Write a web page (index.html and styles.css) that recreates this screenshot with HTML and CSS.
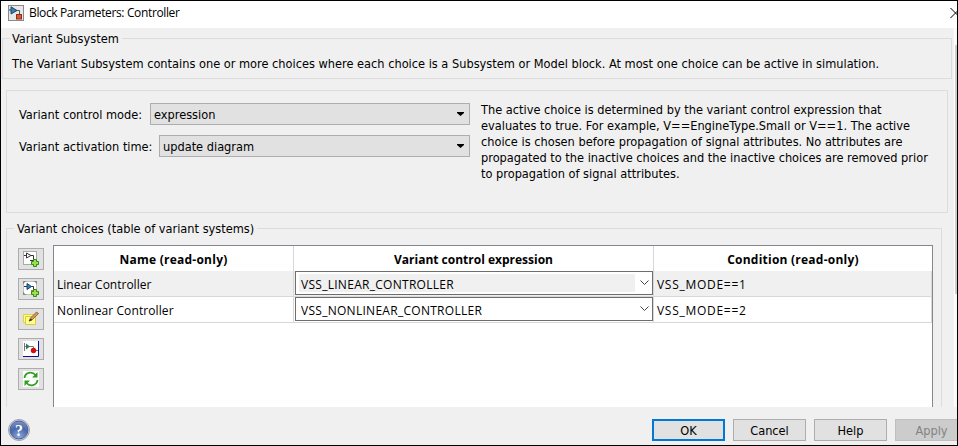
FILE: index.html
```html
<!DOCTYPE html>
<html lang="en">
<head>
<meta charset="utf-8">
<title>Block Parameters: Controller</title>
<link rel="stylesheet" href="styles.css">
</head>
<body>
<div class="dialog">
  <header class="titlebar">
    <svg class="app-icon" width="16" height="16" viewBox="0 0 16 16"><rect x=".5" y=".5" width="15" height="15" fill="#e8e8e8" stroke="#8a8a8a"/><path d="M8 5.500h3.500V9" fill="none" stroke="#555"/><path d="M1 5h2" stroke="#333"/><path d="M3 1.800 9 5.500 3 9z" fill="#2f83b7" stroke="#246"/><rect x="8.500" y="9.500" width="5" height="4.500" fill="#e2542c" stroke="#8e2f18"/></svg>
    <span class="title">Block Parameters: Controller</span>
    <svg class="close" width="7" height="12" viewBox="0 0 7 12"><path d="M.5 1 10.500 11M.5 11 10.500 1" stroke="#000" fill="none"/></svg>
  </header>
  <div class="body">
    <main class="content">
      <section class="group about">
        <h2 class="legend">Variant Subsystem</h2>
        <p>The Variant Subsystem contains one or more choices where each choice is a Subsystem or Model block. At most one choice can be active in simulation.</p>
      </section>
      <section class="group modes">
        <div class="fields">
          <div class="field"><label>Variant control mode:</label><div class="select"><span>expression</span><svg width="7" height="4"><path d="M0 0h7v1L3.500 4 0 1z"/></svg></div></div>
          <div class="field activation"><label>Variant activation time:</label><div class="select"><span>update diagram</span><svg width="7" height="4"><path d="M0 0h7v1L3.500 4 0 1z"/></svg></div></div>
        </div>
        <div class="hint">
          <div>The active choice is determined by the variant control expression that</div>
          <div>evaluates to true. For example, V==EngineType.Small or V==1. The active</div>
          <div>choice is chosen before propagation of signal attributes. No attributes are</div>
          <div>propagated to the inactive choices and the inactive choices are removed prior</div>
          <div>to propagation of signal attributes.</div>
        </div>
      </section>
      <section class="group choices">
        <h2 class="legend">Variant choices (table of variant systems)</h2>
        <div class="tools">
          <button><svg width="16" height="16" viewBox="0 0 16 16"><rect x=".5" y=".5" width="13" height="13" fill="#fff" stroke="#aaa"/><path d="M1 4.500h2M3.500 2v5L8 4.500zM8 4.500h2.500V9M7 9.500h3" fill="none" stroke="#333"/><path d="M10.500 8.500h3v2h2v3h-2v2h-3v-2h-2v-3h2z" fill="#9be04a" stroke="#348a18"/></svg></button>
          <button><svg width="16" height="16" viewBox="0 0 16 16"><rect width="14" height="14" fill="#888"/><rect x=".5" y=".5" width="13" height="13" rx="4" fill="#fff"/><path d="M1 5.500h3M8 5.500h2.500V9" fill="none" stroke="#333"/><path d="M4 2.500v6l4.500-3z" fill="#2585c5" stroke="#246"/><path d="M8 9h3v3H8z" fill="#d66b3b"/><path d="M10.500 8.500h3v2h2v3h-2v2h-3v-2h-2v-3h2z" fill="#9be04a" stroke="#348a18"/></svg></button>
          <button><svg width="16" height="16" viewBox="0 0 16 16"><path d="M.5 3.500h11v8H.5z" fill="#ffff70" stroke="#e0d050"/><path d="M2.500 5.500h10v8h-10z" fill="#ffff8c" stroke="#dcca3c"/><path d="m6 10 1.500-3 6-6 2 1.500-6 6z" fill="#d49a62" stroke="#754323" stroke-width=".7"/><path d="m6 10.500 1.500-3 2 1.500z" fill="#333"/></svg></button>
          <button><svg width="16" height="16" viewBox="0 0 16 16"><rect width="16" height="16" fill="#fff"/><path d="M15.500 0v15.500H0" fill="none" stroke="#0b0b93"/><path d="M1.500 2v8M1 5.500h9.500V9M13 9.500h2" fill="none" stroke="#777"/><path d="M3 2.500v6l4-3z" fill="#2f7b65"/><circle cx="10.500" cy="9.500" r="2.700" fill="#d40c12"/></svg></button>
          <button><svg width="16" height="16" viewBox="0 0 16 16"><rect width="16" height="16" fill="#fff"/><path d="M1.500 7C2 1.500 9 0 12.500 4M14.500 9C14 14.500 7 16 3.500 12" fill="none" stroke="#2fa01e" stroke-width="1.800"/><path d="M14.500 1v5.500H9zM1.500 15V9.500H7z" fill="#2fa01e"/></svg></button>
        </div>
        <div class="table">
          <div class="row head"><div class="cell name">Name (read-only)</div><div class="cell">Variant control expression</div><div class="cell condition">Condition (read-only)</div></div>
          <div class="row shaded"><div class="cell">Linear Controller</div><div class="cell"><div class="combo"><div class="value">VSS_LINEAR_CONTROLLER</div><svg width="9" height="6"><path d="m.5.500 4 4 4-4" fill="none" stroke="#444"/></svg></div></div><div class="cell mode">VSS_MODE==1</div></div>
          <div class="row"><div class="cell nonlinear">Nonlinear Controller</div><div class="cell"><div class="combo"><div class="value">VSS_NONLINEAR_CONTROLLER</div><svg width="9" height="6"><path d="m.5.500 4 4 4-4" fill="none" stroke="#444"/></svg></div></div><div class="cell mode">VSS_MODE==2</div></div>
        </div>
      </section>
    </main>
    <div class="scrollbar"><div class="thumb"></div></div>
  </div>
  <footer class="footer">
    <svg class="help" width="22" height="22" viewBox="0 0 22 22"><defs><radialGradient id="g" cx=".5" cy=".9" r=".9"><stop offset="0" stop-color="#8fa9dc"/><stop offset=".6" stop-color="#4868ac"/><stop offset="1" stop-color="#7e95c6"/></radialGradient></defs><circle cx="11" cy="11" r="10.500" fill="#d4d8e0" stroke="#9a9fa9"/><circle cx="11" cy="11" r="9" fill="url(#g)" stroke="#4b609a"/><text x="11" y="17" text-anchor="middle">?</text></svg>
    <div class="actions"><button class="primary">OK</button><button>Cancel</button><button>Help</button><button class="disabled">Apply</button></div>
  </footer>
</div>
</body>
</html>
```

FILE: styles.css
```css
* { box-sizing: border-box; }
body { margin: 0; overflow: hidden; font: 12.67px/16px "DejaVu Sans Condensed", "DejaVu Sans", sans-serif; font-stretch: condensed; color: #000; white-space: nowrap; }
h2, p { margin: 0; font-size: inherit; font-weight: normal; }
svg { display: block; flex: none; }
.dialog { width: 958px; height: 446px; border: 1px solid #000; background: #f0f0f0; display: flex; flex-direction: column; overflow: hidden; }
.titlebar { height: 27px; background: #fff; display: flex; align-items: center; padding: 0 0 3px 7px; font-family: "Open Sans", sans-serif; font-size: 12px; font-stretch: normal; letter-spacing: -.36px; flex: none; }
.app-icon { margin-right: 5px; }
.close { margin-left: auto; }
.body { display: flex; height: 379px; flex: none; }
.content { width: 953px; overflow: hidden; }
.scrollbar { width: 3px; padding-top: 17px; background: #f8f8f8; border-left: 1px solid #fff; }
.thumb { height: 249px; background: #cdcdcd; }
.group { border: 1px solid #dcdcdc; }
.legend { width: max-content; margin-top: -8px; background: #f0f0f0; }
.about { margin: 10px 0 0 1px; width: 950px; height: 41px; padding-left: 7px; }
.about .legend { padding: 0 3px 0 2px; }
.about p { margin: 9px 0 0 2px; }
.modes { margin: 11px 0 0 5px; width: 942px; height: 123px; display: flex; padding: 12px 0 0 12px; }
.fields { width: 451px; display: grid; grid-auto-rows: 22px; gap: 10px; align-content: start; }
.field { display: grid; grid-template-columns: 131px 320px; align-items: center; }
.field label { padding-top: 2px; }
.activation { grid-template-columns: 140px 311px; }
.select { height: 22px; display: flex; align-items: center; justify-content: space-between; background: #e1e1e1; border: 1px solid #adadad; padding: 0 5px 0 3px; }
.select span { padding-top: 2px; }
.hint { margin: -1px 0 0 11px; }
.choices { margin: 15px 0 0 5px; width: 936px; height: 220px; display: grid; grid-template-columns: 35px 880px; grid-template-rows: 7px 1fr; padding-left: 11px; }
.choices .legend { grid-column: 1 / 3; margin-left: -4px; padding: 0 3px; }
.tools { display: grid; grid-auto-rows: 22px; gap: 8px; padding-top: 12px; align-content: start; }
.tools button { width: 26px; height: 22px; padding: 0; border: 1px solid #adadad; background: #e1e1e1; display: grid; place-items: center; }
.table { margin-top: 9px; border: 1px solid #828790; background: #fff; font-family: "Open Sans", sans-serif; font-size: 12px; font-stretch: normal; }
.row { display: grid; grid-template-columns: 240px 360px 278px; height: 26px; border-bottom: 1px solid #d8d8d8; }
.head { height: 25px; border: 0; font-weight: bold; text-align: center; }
.cell { border-right: 1px solid #d8d8d8; padding: 6px 3px 0; }
.name, .condition { letter-spacing: .24px; }
.nonlinear { letter-spacing: .1px; }
.mode { letter-spacing: .72px; }
.head .cell:last-child { border-right: 0; }
.shaded { background: #f0f0f0; }
.row:not(.head) .cell:nth-child(2) { padding: 0 0 0 1px; }
.combo { height: 24px; border: 1px solid #6e6e6e; background: #fff; display: flex; align-items: center; padding: 2px 3px; gap: 5px; }
.value { flex: 1; height: 18px; padding: 3px 2px 0; letter-spacing: .28px; }
.shaded .value { background: #f0f0f0; }
.footer { flex: 1; display: flex; padding: 12px 0 0 7px; }
.help text { font: bold 16px "Liberation Serif", serif; fill: #fff; }
.actions { display: flex; gap: 8px; margin-left: 622px; }
.actions button { width: 73px; height: 22px; padding: 2px 0 0; border: 1px solid #adadad; background: #e1e1e1; font: inherit; color: #000; flex: none; }
.actions .primary { border: 2px solid #0078d7; }
.actions .disabled { background: #ccc; border-color: #bfbfbf; color: #838383; }
```
